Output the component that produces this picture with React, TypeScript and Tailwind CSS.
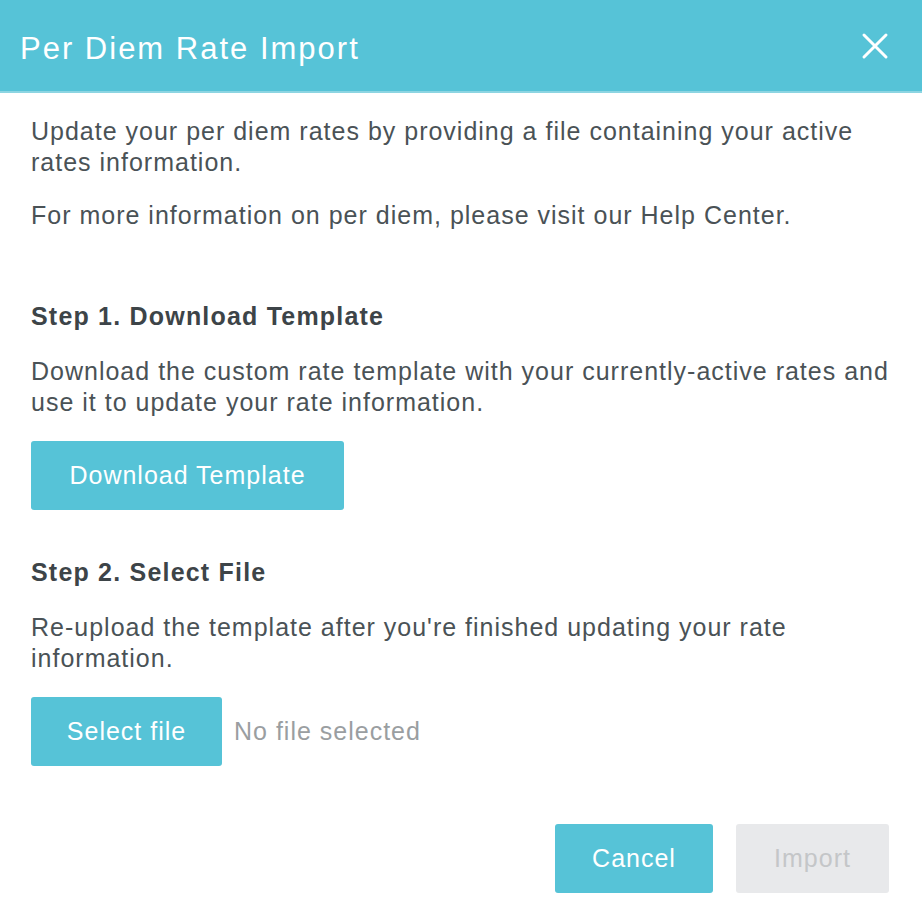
import React, { useState } from 'react';

const font = { fontFamily: '"Liberation Sans", Arial, sans-serif' };

export default function App() {
  const [fileName] = useState<string | null>(null);

  return (
    <div className="w-[922px] h-[914px] bg-white" style={font}>
      {/* header */}
      <div className="h-[93px] bg-[#56c3d7] border-b-2 border-[#8dd5e2] flex items-center justify-between pl-[20px] pr-[31px]">
        <h1 className="pt-[6px] text-white text-[31px] leading-none tracking-[2px]">Per Diem Rate Import</h1>
        <button className="text-white" aria-label="Close">
          <svg width="32" height="32" viewBox="0 0 32 32" fill="none" stroke="currentColor" strokeWidth="3" strokeLinecap="round">
            <path d="M5 5 L27 27 M27 5 L5 27" />
          </svg>
        </button>
      </div>

      {/* body */}
      <div className="pl-[31px] pr-[14px] pt-[23px] text-[25px] leading-[31px] tracking-[1px] text-[#4a5256]">
        <p>Update your per diem rates by providing a file containing your active rates information.</p>
        <p className="mt-[22px]">For more information on per diem, please visit our Help Center.</p>

        <h2 className="mt-[70px] font-bold tracking-[1.2px] text-[#3d4448]">Step 1. Download Template</h2>
        <p className="mt-[24px]">
          Download the custom rate template with your currently-active rates and use it to update your rate information.
        </p>
        <button className="mt-[23px] h-[69px] w-[313px] rounded-[3px] bg-[#56c3d7] text-white tracking-[1px]">
          Download Template
        </button>

        <h2 className="mt-[47px] font-bold tracking-[1.2px] text-[#3d4448]">Step 2. Select File</h2>
        <p className="mt-[24px]">Re-upload the template after you're finished updating your rate information.</p>
        <div className="mt-[23px] flex items-center gap-[12px]">
          <button className="h-[69px] w-[191px] rounded-[3px] bg-[#56c3d7] text-white tracking-[1px]">Select file</button>
          <span className="text-[#9a9ea1]">{fileName ?? 'No file selected'}</span>
        </div>
      </div>

      {/* footer */}
      <div className="mt-[58px] flex justify-end gap-[23px] pr-[33px] text-[25px] tracking-[1px]">
        <button className="h-[69px] w-[158px] rounded-[3px] bg-[#56c3d7] text-white">Cancel</button>
        <button disabled className="h-[69px] w-[153px] rounded-[3px] bg-[#e8e9eb] text-[#c4c6c8]">
          Import
        </button>
      </div>
    </div>
  );
}
